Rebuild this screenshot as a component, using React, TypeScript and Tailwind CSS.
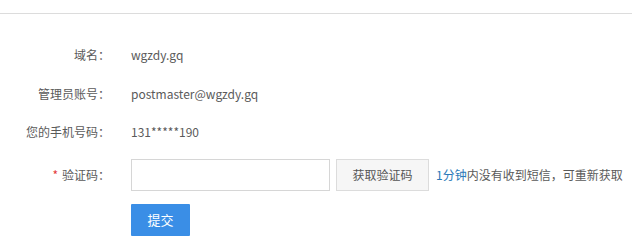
export default function App() {
  const font = { fontFamily: '"Microsoft YaHei", "Noto Sans CJK SC", sans-serif' }

  return (
    <div className="w-[632px] h-[249px] bg-white text-[12px] text-[#5a5a5a] overflow-hidden" style={font}>
      {/* Top divider */}
      <div className="h-[14px] border-b border-[#dcdcdc]" />

      <div className="pt-[31px] flex flex-col">
        {/* Domain */}
        <div className="flex items-center h-[20px]">
          <div className="w-[110px] text-right">域名：</div>
          <div className="ml-[21px]">wgzdy.gq</div>
        </div>

        {/* Admin account */}
        <div className="flex items-center h-[20px] mt-[19px]">
          <div className="w-[110px] text-right">管理员账号：</div>
          <div className="ml-[21px]">postmaster@wgzdy.gq</div>
        </div>

        {/* Phone */}
        <div className="flex items-center h-[20px] mt-[18px]">
          <div className="w-[110px] text-right">您的手机号码：</div>
          <div className="ml-[21px]">131*****190</div>
        </div>

        {/* Verification code */}
        <div className="flex items-center h-[32px] mt-[17px]">
          <div className="w-[110px] text-right">
            <span className="text-[#e4393c] mr-[4px]">*</span>验证码：
          </div>
          <input
            className="ml-[21px] w-[199px] h-[32px] border border-[#d6d6d6] outline-none px-2"
            type="text"
          />
          <button className="ml-[6px] w-[93px] h-[32px] border border-[#dcdcdc] bg-[#f6f6f6] text-[#555] text-[12px]">
            获取验证码
          </button>
          <div className="ml-[7px]">
            <span className="text-[#2a7ab8]">1分钟</span>内没有收到短信，可重新获取
          </div>
        </div>

        {/* Submit */}
        <div className="flex mt-[13px] ml-[131px]">
          <button className="w-[59px] h-[32px] bg-[#3a8ee6] text-white text-[13px] rounded-[1px]">提交</button>
        </div>
      </div>
    </div>
  )
}
